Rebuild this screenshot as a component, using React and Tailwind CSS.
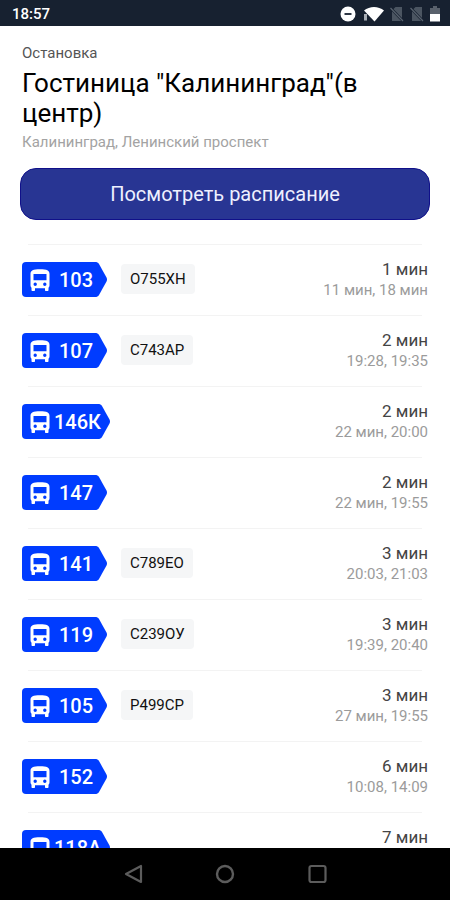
const arrivals = [
    { route: "103", plate: "О755ХН", next: "1 мин", later: "11 мин, 18 мин" },
    { route: "107", plate: "С743АР", next: "2 мин", later: "19:28, 19:35" },
    { route: "146К", next: "2 мин", later: "22 мин, 20:00" },
    { route: "147", next: "2 мин", later: "22 мин, 19:55" },
    { route: "141", plate: "С789ЕО", next: "3 мин", later: "20:03, 21:03" },
    { route: "119", plate: "С239ОУ", next: "3 мин", later: "19:39, 20:40" },
    { route: "105", plate: "Р499СР", next: "3 мин", later: "27 мин, 19:55" },
    { route: "152", next: "6 мин", later: "10:08, 14:09" },
    { route: "118А", next: "7 мин" },
];

function NoSim() {
    return (
        <svg viewBox="0 0 14 16" className="w-3.5 h-4">
            <path d="M5.5 1H12v14H2V4.5z" fill="#4b5561" />
            <path d="M0 1.5L13 15" stroke="#172130" strokeWidth="2.6" />
            <path d="M.5 2L13 15" stroke="#59636f" strokeWidth="1.2" />
        </svg>
    );
}

function StatusBar() {
    return (
        <div className="flex items-center justify-between h-[26px] shrink-0 bg-[#172130] pl-3 pr-2.5 pt-0.5 text-white">
            <span className="text-[15px] font-medium">18:57</span>
            <div className="flex items-center">
                <svg viewBox="0 0 16 16" className="w-4 h-4 mr-2">
                    <circle cx="8" cy="8" r="7.5" fill="#fff" />
                    <path d="M4.5 8h7" stroke="#172130" strokeWidth="1.8" />
                </svg>
                <svg viewBox="0 0 20 16" className="w-5 h-4 mr-1.5">
                    <path d="M0 4.5C5.5-.3 14.5-.3 20 4.5L10.5 15.5z" fill="#fff" />
                    <path d="M0 8h3v6.500H0z" fill="#a9afb6" />
                </svg>
                <span className="mr-1.5"><NoSim /></span>
                <span className="mr-1.5"><NoSim /></span>
                <svg viewBox="0 0 10 16" className="w-2.5 h-4">
                    <path d="M3 0h4v2h3v6H0V2h3z" fill="#59616c" />
                    <path d="M0 8h10v7.5H0z" fill="#fff" />
                </svg>
            </div>
        </div>
    );
}

function BusIcon() {
    return (
        <svg viewBox="0 0 20 22" className="w-5 h-[22px] shrink-0">
            <path
                fill="#fff"
                fillRule="evenodd"
                d="M.5 5C.5 1.500 3 .3 10 .3S19.500 1.500 19.500 5v11.500c0 1-.4 1.700-1 2.200V21c0 .6-.4 1-1 1H16c-.6 0-1-.4-1-1v-1.800H5V21c0 .6-.4 1-1 1H2.500c-.6 0-1-.4-1-1v-2.300c-.6-.5-1-1.200-1-2.200zM3.500 5v6.300h13V5zM5.200 13.600a1.700 1.700 0 1 0 0 3.400 1.700 1.700 0 0 0 0-3.400zM14.800 13.600a1.700 1.700 0 1 0 0 3.400 1.700 1.700 0 0 0 0-3.400z"
            />
        </svg>
    );
}

function RouteTag({ route }) {
    return (
        <span className="relative flex items-center gap-1 h-[35px] min-w-[85px] pl-2 pr-[9px] text-white">
            <span className="absolute inset-0 flex">
                <span className="flex-1 rounded-l bg-[#003cff]" />
                <svg viewBox="0 0 12 35" className="w-3 h-[35px] -ml-px">
                    <path d="M0 0c2 0 3 .6 4 2l7.500 13.500q1 2 0 4L4 33c-1 1.400-2 2-4 2z" fill="#003cff" />
                </svg>
            </span>
            <span className="relative flex"><BusIcon /></span>
            <span className="relative flex-1 text-center text-xl font-medium">{route}</span>
        </span>
    );
}

function ArrivalRow({ route, plate, next, later }) {
    return (
        <li>
            <div className="mx-1.5 border-t border-[#f3f3f3]" />
            <div className="flex items-start h-[70px] pt-[17px]">
                <RouteTag route={route} />
                {plate && (
                    <span className="ml-3.5 mt-0.5 px-[9px] h-[30px] leading-[30px] rounded bg-[#f5f6f7] text-[15px] text-[#111]">
                        {plate}
                    </span>
                )}
                <div className="ml-auto -mt-1 text-right">
                    <div className="text-[17px] leading-[22px] text-[#444]">{next}</div>
                    {later && <div className="text-[15px] leading-5 text-[#9b9b9b]">{later}</div>}
                </div>
            </div>
        </li>
    );
}

function NavBar() {
    return (
        <nav className="flex items-center justify-center gap-[68px] h-[52px] shrink-0 bg-black">
            <button aria-label="Назад" className="w-6 h-6">
                <svg viewBox="0 0 24 24" fill="none" stroke="#5c5c5c" strokeWidth="2.2" strokeLinejoin="round">
                    <path d="M20 4v16L5 12z" />
                </svg>
            </button>
            <button aria-label="Домой" className="w-6 h-6">
                <svg viewBox="0 0 24 24" fill="none" stroke="#5c5c5c" strokeWidth="2.4">
                    <circle cx="12" cy="12" r="8" />
                </svg>
            </button>
            <button aria-label="Недавние" className="w-6 h-6">
                <svg viewBox="0 0 24 24" fill="none" stroke="#5c5c5c" strokeWidth="2.2">
                    <rect x="4.5" y="4" width="16" height="16" rx="2" />
                </svg>
            </button>
        </nav>
    );
}

export default function App() {
    return (
        <div className="flex flex-col h-screen bg-white font-[Roboto,sans-serif]">
            <StatusBar />
            <main className="flex-1 min-h-0 overflow-hidden pt-4">
                <header className="px-[22px]">
                    <p className="text-[15px] leading-[22px] text-[#555]">Остановка</p>
                    <h1 className="text-[26px] leading-[30px] text-black pt-1">Гостиница "Калининград"(в центр)</h1>
                    <p className="text-[15px] leading-5 text-[#a3a3a3] pt-1">Калининград, Ленинский проспект</p>
                </header>
                <div className="px-5 pt-4">
                    <button className="w-full h-[52px] rounded-2xl border border-[#10108a] bg-[#283593] text-xl text-[#eef0ff]">
                        Посмотреть расписание
                    </button>
                </div>
                <ul className="px-[22px] pt-6">
                    {arrivals.map((a) => (
                        <ArrivalRow key={a.route} {...a} />
                    ))}
                </ul>
            </main>
            <NavBar />
        </div>
    );
}
